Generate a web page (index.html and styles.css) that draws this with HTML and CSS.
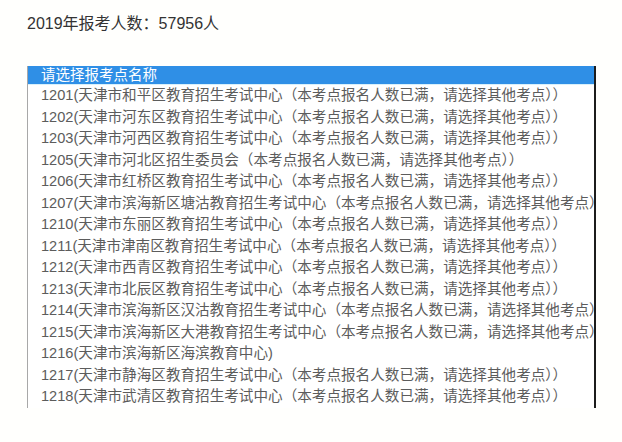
FILE: index.html
```html
<!DOCTYPE html>
<html lang="zh">
<head>
    <meta charset="UTF-8">
    <title>报考点选择</title>
    <link rel="stylesheet" href="styles.css">
</head>
<body>
    <p class="total">2019年报考人数：57956人</p>

    <div class="picker">
        <div class="picker-head">请选择报考点名称</div>
        <ul class="picker-list">
            <li>1201(天津市和平区教育招生考试中心（本考点报名人数已满，请选择其他考点））</li>
            <li>1202(天津市河东区教育招生考试中心（本考点报名人数已满，请选择其他考点））</li>
            <li>1203(天津市河西区教育招生考试中心（本考点报名人数已满，请选择其他考点））</li>
            <li>1205(天津市河北区招生委员会（本考点报名人数已满，请选择其他考点））</li>
            <li>1206(天津市红桥区教育招生考试中心（本考点报名人数已满，请选择其他考点））</li>
            <li>1207(天津市滨海新区塘沽教育招生考试中心（本考点报名人数已满，请选择其他考点））</li>
            <li>1210(天津市东丽区教育招生考试中心（本考点报名人数已满，请选择其他考点））</li>
            <li>1211(天津市津南区教育招生考试中心（本考点报名人数已满，请选择其他考点））</li>
            <li>1212(天津市西青区教育招生考试中心（本考点报名人数已满，请选择其他考点））</li>
            <li>1213(天津市北辰区教育招生考试中心（本考点报名人数已满，请选择其他考点））</li>
            <li>1214(天津市滨海新区汉沽教育招生考试中心（本考点报名人数已满，请选择其他考点））</li>
            <li>1215(天津市滨海新区大港教育招生考试中心（本考点报名人数已满，请选择其他考点））</li>
            <li>1216(天津市滨海新区海滨教育中心)</li>
            <li>1217(天津市静海区教育招生考试中心（本考点报名人数已满，请选择其他考点））</li>
            <li>1218(天津市武清区教育招生考试中心（本考点报名人数已满，请选择其他考点））</li>
        </ul>
    </div>
</body>
</html>
```

FILE: styles.css
```css
body {
    margin: 0;
    padding: 14px 0 0 27px;
    background: #fffffd;
    font-family: "Liberation Sans", "Noto Sans CJK SC", sans-serif;
}
.total {
    margin: 0;
    font-size: 16px;
    line-height: 20px;
    color: #333;
}
.picker {
    margin-top: 32px;
    width: 566px;
    border-left: 1px solid #a8a8a8;
    border-right: 2px solid #1c1c1c;
    background: #fff;
    overflow: hidden;
}
.picker-head {
    background: #2f8fe6;
    color: #fff;
    font-size: 14.5px;
    line-height: 18px;
    padding-left: 13px;
    border-bottom: 1px solid #d8f0fb;
}
.picker-list {
    list-style: none;
    margin: 0;
    padding: 0 0 0 13px;
}
.picker-list li {
    font-size: 14.6px;
    line-height: 21.5px;
    color: #5c5c5c;
    white-space: nowrap;
}
```
